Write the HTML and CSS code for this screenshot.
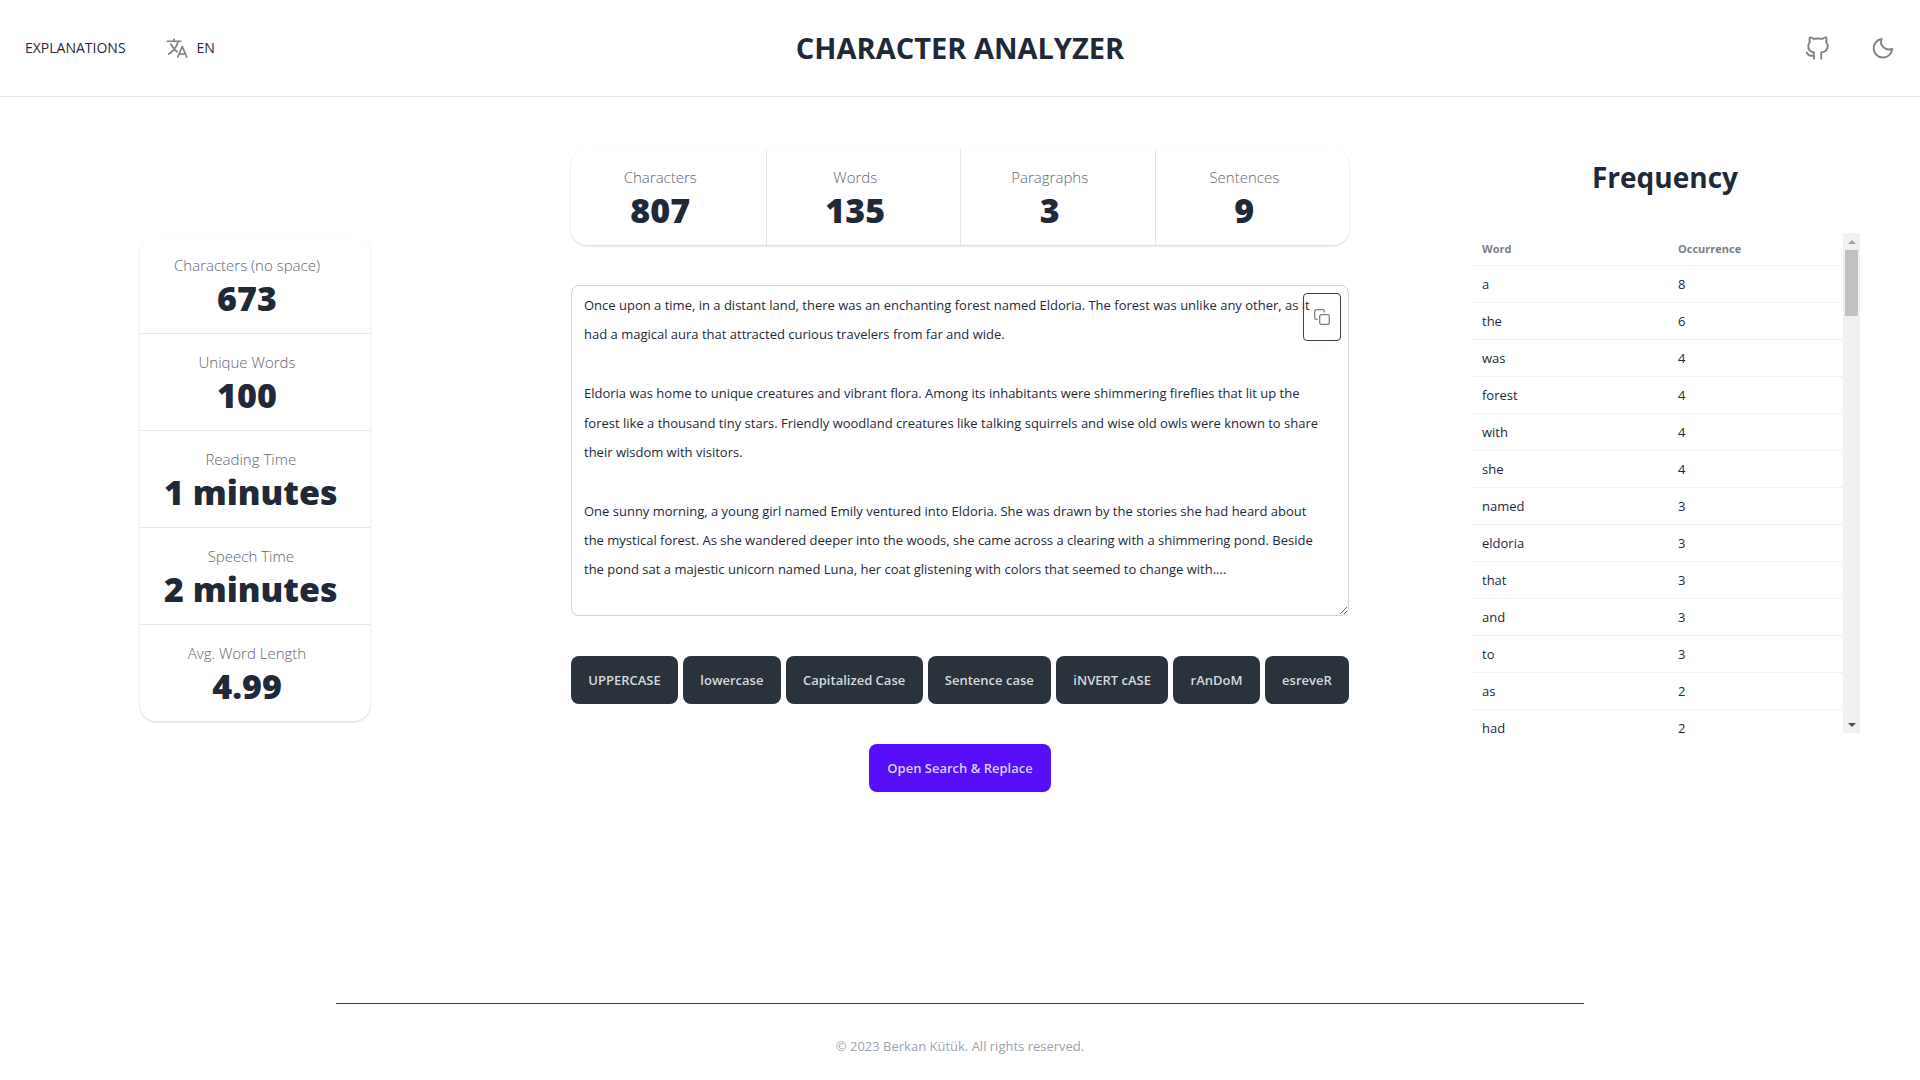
FILE: index.html
```html
<!DOCTYPE html>
<html lang="en">
<head>
<meta charset="utf-8">
<meta name="viewport" content="width=device-width, initial-scale=1">
<title>Character Analyzer</title>
<link rel="stylesheet" href="styles.css">
</head>
<body>
<header class="navbar">
  <nav class="nav-start">
    <a class="nav-link" href="#explanations">EXPLANATIONS</a>
    <button class="lang" type="button">
      <svg class="icon" viewBox="0 0 512 512" fill="none" stroke="currentColor" stroke-width="36" stroke-linecap="round" stroke-linejoin="round" aria-hidden="true">
        <path d="M48 112h288M192 64v48M272 448l96-224 96 224M301.500 384h133M281.300 112S257 206 199 277 80 384 80 384M256 336s-35-27-72-75-56-85-56-85"/>
      </svg>
      <span>EN</span>
    </button>
  </nav>
  <h1 class="brand">CHARACTER ANALYZER</h1>
  <div class="nav-end">
    <a class="icon-link" href="#github" aria-label="GitHub">
      <svg class="icon" viewBox="0 0 24 24" fill="none" stroke="currentColor" stroke-width="1.900" aria-hidden="true">
        <path d="M8.900 23.500V16.500C5.500 16 3.300 13.700 3.300 10.300c0-1.700.6-3.200 1.500-4.300-.5-1.600-.4-3.200.1-4.600 1.500 0 2.900.6 4 1.500 2.700-.6 5.500-.6 8.200 0 1.100-.9 2.500-1.500 4-1.500.5 1.400.6 3 .1 4.600.9 1.100 1.500 2.600 1.500 4.300 0 3.400-2.700 5.700-6.400 6.200V23.500"/>
        <path d="M1 16.500c2 .2 2.200 3.300 4.500 3.300h3.400"/>
      </svg>
    </a>
    <button class="icon-link" type="button" aria-label="Dark theme">
      <svg class="icon" viewBox="0 0 24 24" fill="none" stroke="currentColor" stroke-width="1.900" stroke-linecap="round" stroke-linejoin="round" aria-hidden="true">
        <path d="M10.600 3C8.300 9 13.800 15.200 21.200 13A9.300 9.300 0 1 1 10.600 3z"/>
      </svg>
    </button>
  </div>
</header>

<main class="layout">
  <aside class="side">
    <div class="stats stats-vertical">
      <div class="stat"><div class="stat-title">Characters (no space)</div><div class="stat-value">673</div></div>
      <div class="stat"><div class="stat-title">Unique Words</div><div class="stat-value">100</div></div>
      <div class="stat"><div class="stat-title">Reading Time</div><div class="stat-value">1 minutes</div></div>
      <div class="stat"><div class="stat-title">Speech Time</div><div class="stat-value">2 minutes</div></div>
      <div class="stat"><div class="stat-title">Avg. Word Length</div><div class="stat-value">4.99</div></div>
    </div>
  </aside>

  <section class="editor">
    <div class="stats stats-horizontal">
      <div class="stat"><div class="stat-title">Characters</div><div class="stat-value">807</div></div>
      <div class="stat"><div class="stat-title">Words</div><div class="stat-value">135</div></div>
      <div class="stat"><div class="stat-title">Paragraphs</div><div class="stat-value">3</div></div>
      <div class="stat"><div class="stat-title">Sentences</div><div class="stat-value">9</div></div>
    </div>

    <div class="text-box">
      <textarea class="textarea" aria-label="Text to analyze" spellcheck="false">Once upon a time, in a distant land, there was an enchanting forest named Eldoria. The forest was unlike any other, as it had a magical aura that attracted curious travelers from far and wide.

Eldoria was home to unique creatures and vibrant flora. Among its inhabitants were shimmering fireflies that lit up the forest like a thousand tiny stars. Friendly woodland creatures like talking squirrels and wise old owls were known to share their wisdom with visitors.

One sunny morning, a young girl named Emily ventured into Eldoria. She was drawn by the stories she had heard about the mystical forest. As she wandered deeper into the woods, she came across a clearing with a shimmering pond. Beside the pond sat a majestic unicorn named Luna, her coat glistening with colors that seemed to change with....</textarea>
      <button class="copy" type="button" aria-label="Copy text">
        <svg viewBox="0 0 16 16" fill="none" stroke="currentColor" stroke-width="1.300" stroke-linecap="round" stroke-linejoin="round" aria-hidden="true">
          <rect x="5.700" y="5.700" width="9.600" height="9.600" rx="1.600"/>
          <path d="M3.300 10.300H2.300A1.600 1.600 0 0 1 .7 8.700V2.300A1.600 1.600 0 0 1 2.300.7h6.400a1.600 1.600 0 0 1 1.600 1.600v.6"/>
        </svg>
      </button>
    </div>

    <div class="cases">
      <button class="btn" type="button">UPPERCASE</button>
      <button class="btn" type="button">lowercase</button>
      <button class="btn" type="button">Capitalized Case</button>
      <button class="btn" type="button">Sentence case</button>
      <button class="btn" type="button">iNVERT cASE</button>
      <button class="btn" type="button">rAnDoM</button>
      <button class="btn" type="button">esreveR</button>
    </div>

    <button class="btn btn-primary" type="button">Open Search &amp; Replace</button>
  </section>

  <section class="frequency">
    <h2 class="frequency-title">Frequency</h2>
    <div class="scroller">
      <div class="viewport">
        <table class="table">
          <thead><tr><th scope="col">Word</th><th scope="col">Occurrence</th></tr></thead>
          <tbody>
            <tr><td>a</td><td>8</td></tr>
            <tr><td>the</td><td>6</td></tr>
            <tr><td>was</td><td>4</td></tr>
            <tr><td>forest</td><td>4</td></tr>
            <tr><td>with</td><td>4</td></tr>
            <tr><td>she</td><td>4</td></tr>
            <tr><td>named</td><td>3</td></tr>
            <tr><td>eldoria</td><td>3</td></tr>
            <tr><td>that</td><td>3</td></tr>
            <tr><td>and</td><td>3</td></tr>
            <tr><td>to</td><td>3</td></tr>
            <tr><td>as</td><td>2</td></tr>
            <tr><td>had</td><td>2</td></tr>
          </tbody>
        </table>
      </div>
      <div class="scrollbar" aria-hidden="true">
        <span class="arrow arrow-up"></span>
        <span class="thumb"></span>
        <span class="arrow arrow-down"></span>
      </div>
    </div>
  </section>
</main>

<footer class="footer">
  <p>© 2023 Berkan Kütük. All rights reserved.</p>
</footer>
</body>
</html>
```

FILE: styles.css
```css
*,
*::before,
*::after {
  box-sizing: border-box;
}

body {
  margin: 0;
  min-height: 100vh;
  display: flex;
  flex-direction: column;
  background: #fff;
  color: #1f2937;
  font: 14px/20px "Segoe UI", "Open Sans", "Noto Sans", sans-serif;
}

h1,
h2,
p {
  margin: 0;
}

button,
textarea {
  font: inherit;
  color: inherit;
}

button {
  border: 0;
  padding: 0;
  background: none;
  cursor: pointer;
}

/* Top bar */
.navbar {
  display: grid;
  grid-template-columns: 1fr auto 1fr;
  align-items: center;
  height: 97px;
  padding: 0 25px;
  border-bottom: 1px solid #e5e6e6;
}

.nav-start,
.nav-end {
  display: flex;
  align-items: center;
}

.nav-start {
  gap: 39px;
  font-size: 14px;
}

.nav-end {
  justify-content: flex-end;
  gap: 42px;
}

.nav-link {
  color: inherit;
  text-decoration: none;
}

.lang {
  display: flex;
  align-items: center;
  gap: 8px;
}

.icon {
  display: block;
  width: 24px;
  height: 24px;
  color: #808080;
}

.brand {
  font-size: 29px;
  line-height: 36px;
  font-weight: 700;
}

/* Columns */
.layout {
  display: grid;
  grid-template-columns: 17fr 30fr 17fr;
  align-items: start;
  padding-top: 52px;
}

.side {
  display: flex;
  justify-content: center;
  padding-top: 88px;
}

.editor {
  display: flex;
  flex-direction: column;
  align-items: center;
  gap: 40px;
  padding: 0 61px;
}

/* Stat cards */
.stats {
  display: grid;
  border-radius: 16px;
  box-shadow: 0 1px 3px rgba(0, 0, 0, 0.1), 0 1px 2px rgba(0, 0, 0, 0.08);
}

.stats-horizontal {
  width: 100%;
  grid-template-columns: repeat(4, 1fr);
}

.stats-vertical {
  width: 230px;
  grid-template-columns: minmax(0, 1fr);
}

.stat {
  display: grid;
  grid-template-columns: 1fr;
  justify-items: center;
  padding: 16px 40px 14px 24px;
  white-space: nowrap;
}

.stats-horizontal .stat + .stat {
  border-left: 1px solid #e5e6e6;
}

.stats-vertical .stat + .stat {
  border-top: 1px solid #e5e6e6;
}

.stat-title {
  font-size: 15px;
  line-height: 24px;
  font-weight: 300;
  color: #5f6670;
}

.stat-value {
  font-size: 34px;
  line-height: 42px;
  font-weight: 800;
}

/* Text area */
.text-box {
  position: relative;
  width: 100%;
}

.textarea {
  display: block;
  width: 100%;
  height: 331px;
  padding: 5px 26px 5px 12px;
  border: 1px solid #d2d4d7;
  border-radius: 8px;
  background: #fff;
  font-size: 13px;
  line-height: 2.26;
  resize: vertical;
}

.copy {
  position: absolute;
  top: 8px;
  right: 8px;
  display: grid;
  place-items: center;
  width: 38px;
  height: 48px;
  border: 1px solid #374151;
  border-radius: 4px;
  color: #808080;
}

.copy svg {
  width: 16px;
  height: 16px;
}

/* Buttons */
.cases {
  display: flex;
  gap: 5px;
  width: 100%;
}

.cases .btn {
  flex: 1 1 auto;
}

.btn {
  height: 48px;
  padding: 0 16px;
  border-radius: 8px;
  background: #2a323c;
  color: #d5d9de;
  font-size: 13px;
  font-weight: 600;
  white-space: nowrap;
}

.btn-primary {
  padding: 0 18px;
  background: #570df8;
  color: #ddd0fe;
}

/* Frequency table */
.frequency {
  display: flex;
  flex-direction: column;
  align-items: center;
  gap: 36px;
  padding: 8px 60px 0;
}

.frequency-title {
  font-size: 28px;
  line-height: 40px;
  font-weight: 700;
}

.scroller {
  display: flex;
  width: 100%;
  height: 500px;
}

.viewport {
  flex: 1;
  overflow: hidden;
}

.table {
  width: 100%;
  table-layout: fixed;
  border-collapse: separate;
  border-spacing: 0;
  text-align: left;
}

.table th,
.table td {
  padding: 8px 12px;
  border-bottom: 1px solid #f2f2f2;
  font-size: 13px;
}

.table th {
  font-size: 11px;
  line-height: 16px;
  font-weight: 700;
  color: #797f87;
}

.table th:first-child {
  width: 196px;
}

.scrollbar {
  display: flex;
  flex-direction: column;
  align-items: center;
  width: 17px;
  background: #f1f1f1;
}

.arrow {
  display: grid;
  place-items: center;
  width: 17px;
  height: 17px;
}

.arrow::before {
  content: "";
  border: 4px solid transparent;
}

.arrow-up::before {
  border-top: 0;
  border-bottom-color: #a3a3a3;
}

.arrow-down {
  margin-top: auto;
}

.arrow-down::before {
  border-bottom: 0;
  border-top-color: #505050;
}

.thumb {
  width: 13px;
  height: 66px;
  background: #c1c1c1;
}

/* Footer */
.footer {
  width: 65%;
  margin: auto auto 0;
  padding: 32px 0 24px;
  border-top: 1px solid #374151;
  font-size: 13px;
  text-align: center;
  color: #9ca3af;
}
```
